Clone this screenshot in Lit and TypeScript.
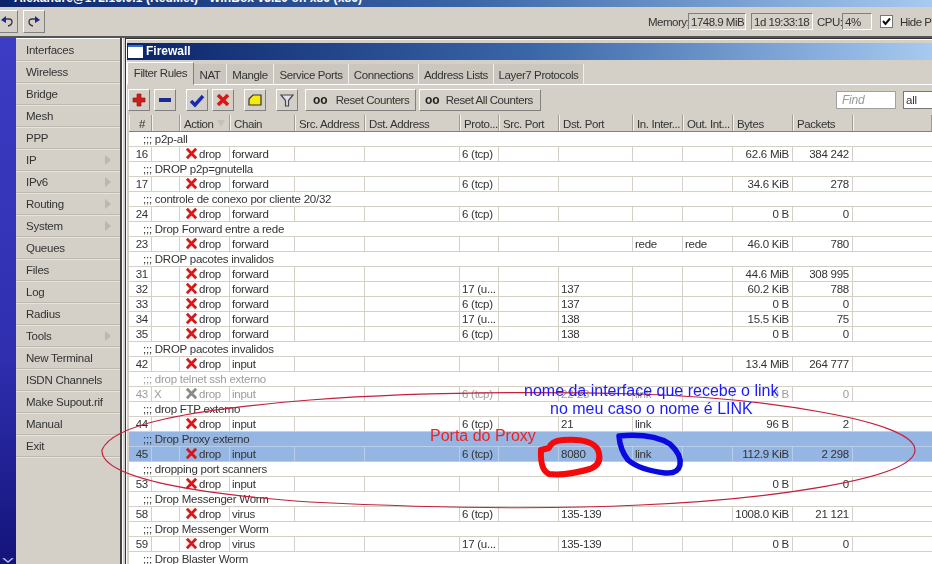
import { LitElement, html, css, svg } from "lit";
import { customElement } from "lit/decorators.js";

const menu: [string, boolean][] = [
  ["Interfaces", false], ["Wireless", false], ["Bridge", false], ["Mesh", false], ["PPP", false],
  ["IP", true], ["IPv6", true], ["Routing", true], ["System", true], ["Queues", false], ["Files", false],
  ["Log", false], ["Radius", false], ["Tools", true], ["New Terminal", false], ["ISDN Channels", false],
  ["Make Supout.rif", false], ["Manual", false], ["Exit", false],
];
const tabs = ["Filter Rules", "NAT", "Mangle", "Service Ports", "Connections", "Address Lists", "Layer7 Protocols"];
const cols = ["#", "", "Action", "Chain", "Src. Address", "Dst. Address", "Proto...", "Src. Port", "Dst. Port", "In. Inter...", "Out. Int...", "Bytes", "Packets", ""];

type Row = { c?: string; gray?: boolean; sel?: boolean; n?: string; f?: string; ch?: string; p?: string; dp?: string; i?: string; o?: string; b?: string; k?: string };
const rows: Row[] = [
  { c: ";;; p2p-all" },
  { n: "16", ch: "forward", p: "6 (tcp)", b: "62.6 MiB", k: "384 242" },
  { c: ";;; DROP p2p=gnutella" },
  { n: "17", ch: "forward", p: "6 (tcp)", b: "34.6 KiB", k: "278" },
  { c: ";;; controle de conexo por cliente 20/32" },
  { n: "24", ch: "forward", p: "6 (tcp)", b: "0 B", k: "0" },
  { c: ";;; Drop Forward entre a rede" },
  { n: "23", ch: "forward", i: "rede", o: "rede", b: "46.0 KiB", k: "780" },
  { c: ";;; DROP pacotes invalidos" },
  { n: "31", ch: "forward", b: "44.6 MiB", k: "308 995" },
  { n: "32", ch: "forward", p: "17 (u...", dp: "137", b: "60.2 KiB", k: "788" },
  { n: "33", ch: "forward", p: "6 (tcp)", dp: "137", b: "0 B", k: "0" },
  { n: "34", ch: "forward", p: "17 (u...", dp: "138", b: "15.5 KiB", k: "75" },
  { n: "35", ch: "forward", p: "6 (tcp)", dp: "138", b: "0 B", k: "0" },
  { c: ";;; DROP pacotes invalidos" },
  { n: "42", ch: "input", b: "13.4 MiB", k: "264 777" },
  { c: ";;; drop telnet ssh externo", gray: true },
  { n: "43", f: "X", ch: "input", p: "6 (tcp)", dp: "22-23", i: "link", b: "0 B", k: "0", gray: true },
  { c: ";;; drop FTP externo" },
  { n: "44", ch: "input", p: "6 (tcp)", dp: "21", i: "link", b: "96 B", k: "2" },
  { c: ";;; Drop Proxy externo", sel: true },
  { n: "45", ch: "input", p: "6 (tcp)", dp: "8080", i: "link", b: "112.9 KiB", k: "2 298", sel: true },
  { c: ";;; dropping port scanners" },
  { n: "53", ch: "input", b: "0 B", k: "0" },
  { c: ";;; Drop Messenger Worm" },
  { n: "58", ch: "virus", p: "6 (tcp)", dp: "135-139", b: "1008.0 KiB", k: "21 121" },
  { c: ";;; Drop Messenger Worm" },
  { n: "59", ch: "virus", p: "17 (u...", dp: "135-139", b: "0 B", k: "0" },
  { c: ";;; Drop Blaster Worm" },
];

const xIcon = (color: string) => html`<svg class="x" viewBox="0 0 14 14"><path d="M2 2 L12 12 M12 2 L2 12" stroke=${color} stroke-width="3"/></svg>`;

@customElement("app-root")
export class AppRoot extends LitElement {
  static styles = css`
    :host { display: block; width: 932px; height: 564px; position: relative; overflow: hidden; background: #d4d0c8;
      font: 11.5px "Liberation Sans", Arial, sans-serif; letter-spacing: -0.25px; color: #333; }
    .soft { width: 932px; height: 564px; display: flex; flex-direction: column; filter: blur(0.35px); }
    .title { height: 7px; flex: none; overflow: hidden; background: linear-gradient(90deg, #0a246a, #3a66a8 50%, #a6caf0);
      color: #fff; font-weight: bold; font-size: 12px; letter-spacing: 0.1px; line-height: 14px; padding-left: 14px; }
    .title span { display: block; margin-top: -9px; white-space: nowrap; }
    .top { height: 31px; box-sizing: border-box; flex: none; display: flex; align-items: center; border-bottom: 2px solid #555; box-shadow: 0 1px 0 #fff; }
    .histbtn { width: 22px; height: 23px; box-sizing: border-box; border: 1px solid; border-color: #fff #808080 #808080 #fff; display: flex; align-items: center; justify-content: center; margin-right: 5px; flex: none; }
    .histbtn.first { margin-left: -4px; }
    .histbtn svg { width: 14px; height: 12px; }
    .status { margin-left: auto; display: flex; align-items: center; white-space: nowrap; width: 284px; flex: none; overflow: hidden; letter-spacing: -0.5px; }
    .lbl { flex: none; }
    .lbl.mem { width: 40px; }
    .lbl.cpu { width: 25px; margin-left: 4px; }
    .box { height: 17px; line-height: 17px; box-sizing: border-box; border: 1px solid; border-color: #808080 #fff #fff #808080; padding-left: 2px; flex: none; }
    .box.mem { width: 58px; }
    .box.time { width: 62px; margin-left: 5px; }
    .box.cpu { width: 30px; }
    .chk { width: 11px; height: 11px; background: #fff; border: 1px solid #777; margin: 0 7px 0 8px; display: flex; flex: none; }
    .chk svg { width: 11px; height: 11px; }
    .main { flex: 1; display: flex; min-height: 0; }
    .strip { width: 16px; flex: none; background: linear-gradient(180deg, #3c3cc4, #2f2fb0 60%, #14147a); position: relative; }
    .strip svg { position: absolute; left: 2px; bottom: 0; width: 12px; height: 6px; }
    .menu { width: 104px; flex: none; display: flex; flex-direction: column; padding-top: 1px; }
    .mi { height: 21px; border-bottom: 1px solid #bdb9b0; box-shadow: 0 1px 0 #e6e3dc; padding-left: 10px; display: flex; align-items: center; justify-content: space-between; padding-right: 9px; flex: none; }
    .mi i { border-left: 6px solid #bbb7ae; border-top: 5px solid transparent; border-bottom: 5px solid transparent; }
    .work { flex: 1; min-width: 0; border-left: 2px solid #444; background: #d4d0c8; padding-left: 1px; box-shadow: inset 1px 0 0 #fff; }
    .win { margin: 0 0 0 2px; border-left: 1px solid #333; border-top: 1px solid #333; padding: 4px 0 0 1px; box-shadow: inset 1px 1px 0 #fff; height: 540px; }
    .wt { height: 17px; box-sizing: border-box; padding-bottom: 2px; background: linear-gradient(90deg, #0a246a, #3a66a8 50%, #a6caf0); display: flex; align-items: center; color: #fff; font-weight: bold; font-size: 12px; letter-spacing: 0; gap: 3px; }
    .wt svg { width: 15px; height: 13px; flex: none; margin: 2px 0 0 1px; }
    .tabs { display: flex; height: 24px; align-items: flex-end; border-bottom: 1px solid #fff; letter-spacing: -0.4px; }
    .tab { height: 20px; line-height: 22px; background: #cbc7bf; border-right: 1px solid #eee; text-align: center; flex: none; white-space: nowrap; box-sizing: border-box; }
    .tab.on { height: 23px; line-height: 20px; background: #d4d0c8; border: 1px solid; border-color: #fff #808080 #d4d0c8 #fff; margin-bottom: -1px; }
    .tools { height: 30px; display: flex; align-items: center; padding-left: 1px; gap: 4px; flex: none; }
    .tb { height: 22px; width: 22px; box-sizing: border-box; border: 1px solid; border-color: #fff #808080 #808080 #fff; display: flex; align-items: center; justify-content: center; flex: none; white-space: nowrap; letter-spacing: -0.45px; }
    .tb svg { width: 16px; height: 16px; }
    .tb.wide { justify-content: flex-start; }
    .tb.r1 { width: 111px; margin-left: 3px; gap: 8px; padding-left: 7px; }
    .tb.r2 { width: 122px; margin-left: -1px; gap: 6px; padding-left: 5px; }
    .tb b { font-size: 12px; letter-spacing: 0; color: #222; }
    .gl { margin-left: 6px; }
    .find { margin-left: auto; width: 60px; height: 18px; box-sizing: border-box; background: #fff; border: 1px solid #a0a0a0; font-style: italic; color: #999; font-size: 12px; padding-left: 5px; line-height: 16px; flex: none; }
    .sel { margin-left: 3px; width: 40px; margin-right: -11px; height: 18px; box-sizing: border-box; background: #fff; border: 1px solid #777; padding-left: 2px; line-height: 16px; flex: none; }
    .tbl { margin-left: 2px; }
    .row { display: grid; grid-template-columns: 23px 28px 50px 65px 70px 95px 39px 60px 74px 50px 50px 60px 60px 1fr; height: 15px; box-sizing: border-box; border-bottom: 1px solid #d4d0c8; background: #fff; line-height: 15px; white-space: nowrap; }
    .head { height: 17px; background: #d4d0c8; border-bottom: 1px solid #808080; line-height: 18px; letter-spacing: -0.4px; }
    .head div { border-left: 1px solid #f4f2ee; border-right: 1px solid #a09c94; padding-left: 3px; box-sizing: border-box; position: relative; overflow: hidden; }
    .head div:nth-child(1) { text-align: center; }
    .sort { position: absolute; right: 4px; top: 5px; border-top: 7px solid #c4c0b8; border-left: 4px solid transparent; border-right: 4px solid transparent; }
    .cell { border-right: 1px solid #d4d0c8; padding-left: 2px; overflow: hidden; box-sizing: border-box; }
    .cell.r { text-align: right; padding-right: 3px; }
    .cmt { padding-left: 14px; grid-column: 1 / -1; }
    .row.sel0 { background: #95b6e3; border-bottom-color: #b8cdea; }
    .row.sel0 .cell { border-right-color: #b8cdea; }
    .row.gray { color: #9c9c9c; }
    .act { display: flex; align-items: center; gap: 1px; padding-left: 5px; }
    .x { width: 13px; height: 13px; flex: none; margin-top: -1px; }
    .ann { position: absolute; left: 0; top: 0; width: 932px; height: 564px; pointer-events: none; }
    .note { position: absolute; white-space: nowrap; font-size: 16px; letter-spacing: 0; line-height: 18px; color: #1a1aff; }
    .n1 { left: 524px; top: 382px; }
    .n2 { left: 550px; top: 400px; }
    .note.red { left: 430px; top: 427px; color: #f02020; }
  `;

  private ruleRow(r: Row) {
    if (r.c) {
      return html`<div class="row ${r.sel ? "sel0" : ""} ${r.gray ? "gray" : ""}"><div class="cmt">${r.c}</div></div>`;
    }
    return html`<div class="row ${r.sel ? "sel0" : ""} ${r.gray ? "gray" : ""}">
      <div class="cell r">${r.n}</div>
      <div class="cell">${r.f ?? ""}</div>
      <div class="cell act">${xIcon(r.gray ? "#8a8a8a" : "#d81818")}<span>drop</span></div>
      <div class="cell">${r.ch}</div>
      <div class="cell"></div>
      <div class="cell"></div>
      <div class="cell">${r.p ?? ""}</div>
      <div class="cell"></div>
      <div class="cell">${r.dp ?? ""}</div>
      <div class="cell">${r.i ?? ""}</div>
      <div class="cell">${r.o ?? ""}</div>
      <div class="cell r">${r.b ?? ""}</div>
      <div class="cell r">${r.k ?? ""}</div>
    </div>`;
  }

  render() {
    return html`
      <div class="soft">
        <div class="title"><span>Alexandre@172.16.0.1 (RedMet) - WinBox v3.20 on x86 (x86)</span></div>
        <div class="top">
          <div class="histbtn first"><svg viewBox="0 0 14 12"><path d="M5 3 H9 Q12 3 12 6 Q12 9 8 10" fill="none" stroke="#334" stroke-width="1.3"/><path d="M6 0 L1 4 L6 7 Z" fill="#1a2a90"/></svg></div>
          <div class="histbtn"><svg viewBox="0 0 14 12"><path d="M9 3 H5 Q2 3 2 6 Q2 9 6 10" fill="none" stroke="#334" stroke-width="1.3"/><path d="M8 0 L13 4 L8 7 Z" fill="#1a2a90"/></svg></div>
          <div class="status">
            <span class="lbl mem">Memory:</span><span class="box mem">1748.9 MiB</span>
            <span class="box time">1d 19:33:18</span>
            <span class="lbl cpu">CPU:</span><span class="box cpu">4%</span>
            <span class="chk"><svg viewBox="0 0 11 11"><path d="M2 5 L4.5 8 L9 2.5" fill="none" stroke="#111" stroke-width="2"/></svg></span>
            <span>Hide Passwords</span>
          </div>
        </div>
        <div class="main">
          <div class="strip"><svg viewBox="0 0 12 6"><path d="M1 0 L6 4 L11 0" fill="none" stroke="#b8b8e8" stroke-width="1.5"/></svg></div>
          <div class="menu">
            ${menu.map(([m, sub]) => html`<div class="mi"><span>${m}</span>${sub ? html`<i></i>` : ""}</div>`)}
          </div>
          <div class="work">
            <div class="win">
              <div class="wt">
                <svg viewBox="0 0 15 13"><rect width="15" height="13" fill="#fff"/><rect width="15" height="2" fill="#3a6ad0"/></svg>
                <span>Firewall</span>
              </div>
              <div class="tabs">
                ${tabs.map((t, i) => html`<div class="tab ${i === 0 ? "on" : ""}" style="width:${[67, 33, 47, 75, 70, 75, 90][i]}px">${t}</div>`)}
              </div>
              <div class="tools">
                <div class="tb"><svg viewBox="0 0 16 16"><path d="M6 2 H10 V6 H14 V10 H10 V14 H6 V10 H2 V6 H6 Z" fill="#d81818" stroke="#7a2020" stroke-width="0.7"/></svg></div>
                <div class="tb"><svg viewBox="0 0 16 16"><path d="M2 8 H14" stroke="#1a2a90" stroke-width="4"/></svg></div>
                <div class="tb gl"><svg viewBox="0 0 16 16"><path d="M2 9 L6 13 L14 4" fill="none" stroke="#1a2ab0" stroke-width="3.4"/></svg></div>
                <div class="tb"><svg viewBox="0 0 16 16"><path d="M3 3 L13 13 M13 3 L3 13" stroke="#d81818" stroke-width="3.6"/></svg></div>
                <div class="tb gl"><svg viewBox="0 0 16 16"><path d="M2 7 L6 3 H14 V13 H2 Z" fill="#f4ec10" stroke="#333" stroke-width="1.2"/></svg></div>
                <div class="tb gl"><svg viewBox="0 0 16 16"><path d="M2 3 H14 L9.5 8.5 V14 H6.5 V8.5 Z" fill="#dfe3e8" stroke="#445" stroke-width="1.2"/></svg></div>
                <div class="tb wide r1"><b>oo</b><span>Reset Counters</span></div>
                <div class="tb wide r2"><b>oo</b><span>Reset All Counters</span></div>
                <div class="find">Find</div>
                <div class="sel">all</div>
              </div>
              <div class="tbl">
                <div class="row head">${cols.map((c) => html`<div>${c}${c === "Action" ? html`<span class="sort"></span>` : ""}</div>`)}</div>
                ${rows.map((r) => this.ruleRow(r))}
              </div>
            </div>
          </div>
        </div>
      </div>
      <svg class="ann" viewBox="0 0 932 564">
        ${svg`<path d="M102 450 C112 424 190 410 310 400 C400 393 520 391 640 394 C760 398 915 420 915 450 C915 480 760 500 640 505 C540 510 430 508 310 502 C210 495 100 480 102 450 Z" fill="none" stroke="#c4203c" stroke-width="1.2"/>
        <path d="M541 450 L549 448 Q551 441 563 440 Q592 438 598 450 Q603 464 590 469 Q565 476 549 474 Q540 470 541 450" fill="none" stroke="#f40a0a" stroke-width="6" stroke-linecap="round" stroke-linejoin="round"/>
        <path d="M619 436 Q652 433 670 444 Q682 455 680 465 Q678 474 665 473 Q640 470 628 460 Q620 450 619 436" fill="none" stroke="#0a0ae0" stroke-width="5.5" stroke-linecap="round" stroke-linejoin="round"/>`}
      </svg>
      <div class="note n1">nome da interface que recebe o link</div>
      <div class="note n2">no meu caso o nome é LINK</div>
      <div class="note red">Porta do Proxy</div>
    `;
  }
}
